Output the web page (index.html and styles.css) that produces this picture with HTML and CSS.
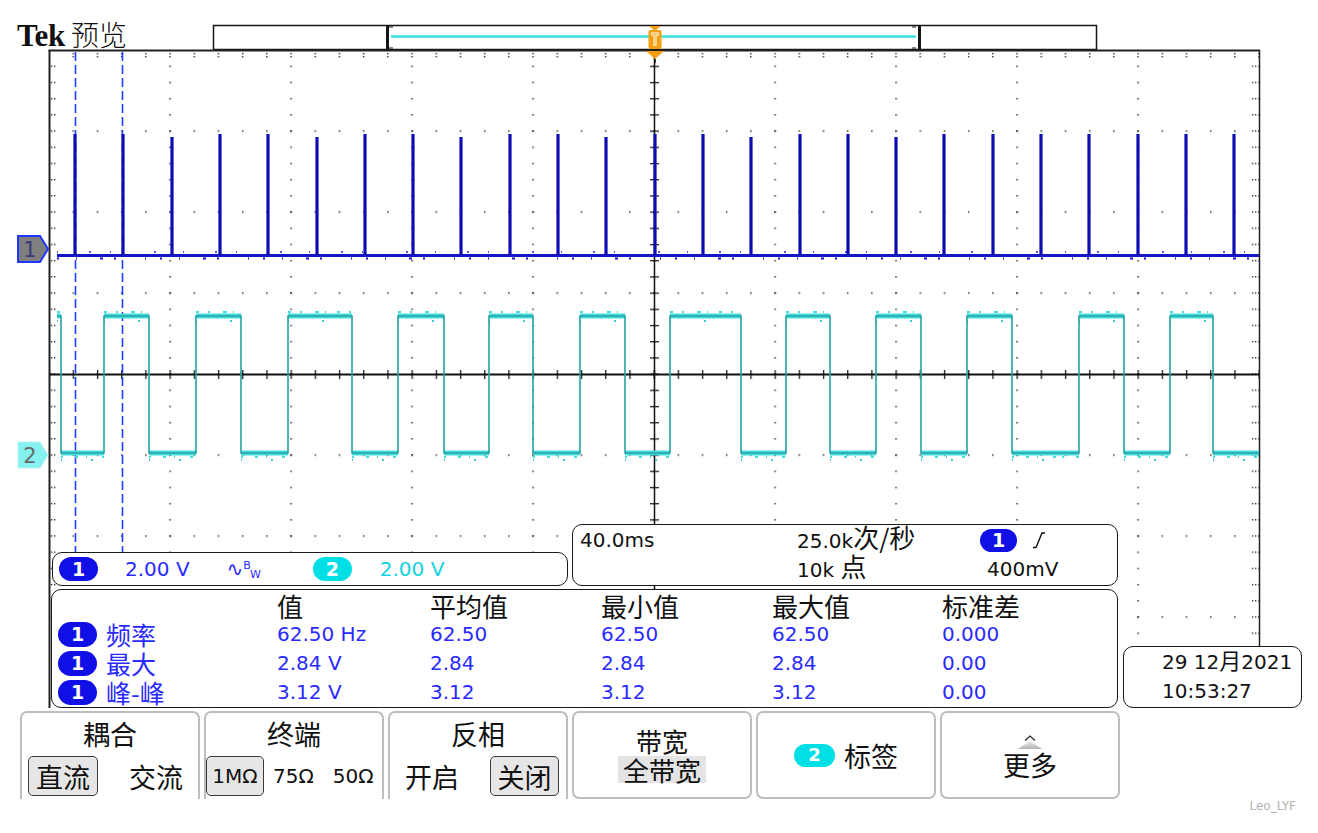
FILE: index.html
```html
<!DOCTYPE html>
<html lang="zh">
<head>
<meta charset="utf-8">
<title>Tek 预览</title>
<link rel="stylesheet" href="styles.css">
</head>
<body>
<div class="scope">
  <div class="screen">
    <svg class="plot" width="1318" height="711" viewBox="0 0 1318 711">
      <defs>
        <pattern id="rowdots" x="48.3" y="49.3" width="24.2" height="81" patternUnits="userSpaceOnUse"><rect width="1.5" height="1.5" fill="#333"/></pattern>
        <pattern id="coldots" x="48.3" y="49.3" width="121" height="16.2" patternUnits="userSpaceOnUse"><rect width="1.5" height="1.5" fill="#333"/></pattern>
        <pattern id="hticks" x="48.5" y="370" width="24.2" height="9" patternUnits="userSpaceOnUse"><rect width="1.3" height="9" fill="#222"/></pattern>
        <pattern id="vticks" x="650" y="49.5" width="9" height="16.2" patternUnits="userSpaceOnUse"><rect width="9" height="1.3" fill="#222"/></pattern>
        <pattern id="lticks" x="51" y="49.3" width="8" height="16.2" patternUnits="userSpaceOnUse"><rect width="1.4" height="1.4" fill="#333"/><rect x="3" width="1.4" height="1.4" fill="#333"/></pattern>
        <pattern id="rticks" x="1252" y="49.3" width="8" height="16.2" patternUnits="userSpaceOnUse"><rect width="1.4" height="1.4" fill="#333"/><rect x="3" width="1.4" height="1.4" fill="#333"/></pattern>
        <pattern id="tticks" x="48.3" y="53" width="24.2" height="8" patternUnits="userSpaceOnUse"><rect width="1.4" height="1.4" fill="#333"/><rect y="3" width="1.4" height="1.4" fill="#333"/></pattern>
        <path id="hi" d="M57 316H61M104 316H149M196 316H241M288 316H352M398 316H444M489 316H533M580 316H625M670 316H741M786 316H830M876 316H921M967 316H1012M1079 316H1124M1170 316H1213"/>
        <path id="lo" d="M61 453H104M149 453H196M241 453H288M352 453H398M444 453H489M533 453H580M625 453H670M741 453H786M830 453H876M921 453H967M1012 453H1079M1124 453H1170M1213 453H1259"/>
      </defs>

      <!-- record view bar -->
      <rect x="213.5" y="25.5" width="883" height="24" fill="#fff" stroke="#151515" stroke-width="1.5"/>
      <rect x="386" y="25" width="3" height="25" fill="#151515"/>
      <rect x="918" y="25" width="3" height="25" fill="#151515"/>
      <path d="M389 27H393M389 48H393M916 27H912M916 48H912" stroke="#151515" stroke-width="1.2"/>
      <path d="M391 36.5H916" stroke="#33e2e6" stroke-width="2.5"/>

      <!-- graticule -->
      <rect x="49" y="50" width="1210" height="650" fill="url(#rowdots)"/>
      <rect x="49" y="50" width="1210" height="650" fill="url(#coldots)"/>
      <rect x="49" y="370" width="1210" height="9" fill="url(#hticks)"/>
      <rect x="650" y="50" width="9" height="650" fill="url(#vticks)"/>
      <rect x="51" y="50" width="6" height="650" fill="url(#lticks)"/>
      <rect x="1252" y="50" width="6" height="600" fill="url(#rticks)"/>
      <rect x="49" y="53" width="1210" height="6" fill="url(#tticks)"/>
      <path d="M49.5 50V708" stroke="#222" stroke-width="2"/>
      <path d="M48.5 50.5H1260" stroke="#222" stroke-width="2"/>
      <path d="M1259.5 50V647" stroke="#222" stroke-width="1.5"/>
      <path d="M49 374.5H1259" stroke="#111" stroke-width="2"/>
      <path d="M654.5 50V700" stroke="#111" stroke-width="1.5"/>

      <!-- cursors -->
      <path d="M75.5 52V553M122.5 52V553" stroke="#2040ff" stroke-width="1.6" stroke-dasharray="9 4"/>

      <!-- channel 2 -->
      <use href="#hi" stroke="#44dcdc" stroke-width="5" fill="none"/>
      <use href="#lo" stroke="#44dcdc" stroke-width="5" fill="none"/>
      <use href="#hi" transform="translate(0,-4)" stroke="#44dcdc" stroke-width="2" stroke-dasharray="3 9 2 13 4 6 1 11" fill="none"/>
      <use href="#lo" transform="translate(0,4)" stroke="#44dcdc" stroke-width="2" stroke-dasharray="2 12 3 8 1 15 3 6" fill="none"/>
      <use href="#lo" transform="translate(0,7)" stroke="#3fcaca" stroke-width="2" stroke-dasharray="1 29 2 37" fill="none"/>
      <use href="#hi" transform="translate(0,5)" stroke="#3fcaca" stroke-width="2" stroke-dasharray="1 33 2 41" fill="none"/>
      <path d="M57 316H61V453H104V316H149V453H196V316H241V453H288V316H352V453H398V316H444V453H489V316H533V453H580V316H625V453H670V316H741V453H786V316H830V453H876V316H921V453H967V316H1012V453H1079V316H1124V453H1170V316H1213V453H1259" fill="none" stroke="#27a2a2" stroke-width="1.6"/>

      <!-- channel 1 -->
      <path d="M57 255.5H1259" stroke="#1515c4" stroke-width="3"/>
      <path d="M57 258.5H1259" stroke="#1515c4" stroke-width="2" stroke-dasharray="2 17 1 23 3 11 2 29 1 14" />
      <path d="M57 252H1259" stroke="#1a1ad0" stroke-width="1.5" stroke-dasharray="1 31 2 19 1 43 2 27" />
      <path d="M75 255V134M123 255V134M172 255V137M220 255V134M268 255V134M317 255V137M365 255V134M413 255V134M461 255V137M510 255V134M558 255V134M606 255V137M655 255V134M703 255V134M751 255V137M800 255V134M848 255V134M896 255V137M944 255V134M993 255V134M1041 255V134M1089 255V134M1138 255V134M1186 255V134M1234 255V134" stroke="#0c0cb4" stroke-width="3.2"/>

      <!-- channel markers -->
      <path d="M18 236H40L48 249L40 262H18Z" fill="#7f7f7f" stroke="#2036ff" stroke-width="2"/>
      <text x="30" y="257" class="mk mk1">1</text>
      <path d="M18 442H40L48 455L40 468H18Z" fill="#86f1f1" stroke="#b4f6f6" stroke-width="1"/>
      <text x="30" y="463" class="mk mk2">2</text>

      <!-- trigger position marker -->
      <path d="M649 26H661L655 31Z" fill="#f5a013"/>
      <rect x="648.5" y="30" width="13" height="19" rx="2" fill="#f5a013"/>
      <path d="M651 34H659M655 34V46" stroke="#fff" stroke-width="3"/>
      <path d="M651.5 34H658.5M655 34V45.5" stroke="#f5a013" stroke-width="1"/>
      <path d="M646 51H664L655 59Z" fill="#f5a013"/>
      <path d="M655 59V63" stroke="#111" stroke-width="1.5"/>
    </svg>

    <div class="logo"><span class="tek">Tek</span><span class="mode">预览</span></div>

    <div class="box chan-box">
      <span class="pill p1">1</span>
      <span class="blue v1">2.00 V</span>
      <span class="blue bw">∿<sup>B</sup><sub>W</sub></span>
      <span class="pill p2">2</span>
      <span class="cyan v2">2.00 V</span>
    </div>

    <div class="box time-box">
      <span>40.0ms</span>
      <span>25.0k<span class="cn">次/秒</span></span>
      <span class="trig"><span class="pill p1 small">1</span><svg class="edge" width="14" height="20" viewBox="0 0 14 20"><path d="M1 17.5H4L10 3H13" fill="none" stroke="#111" stroke-width="1.4"/></svg></span>
      <span></span>
      <span>10k <span class="cn">点</span></span>
      <span class="lvl">400mV</span>
    </div>

    <div class="box meas-box">
      <span></span>
      <span class="hd">值</span>
      <span class="hd">平均值</span>
      <span class="hd">最小值</span>
      <span class="hd">最大值</span>
      <span class="hd">标准差</span>

      <span class="lab"><span class="pill p1 tall">1</span><span class="lname blue">频率</span></span>
      <span class="blue">62.50 Hz</span>
      <span class="blue">62.50</span>
      <span class="blue">62.50</span>
      <span class="blue">62.50</span>
      <span class="blue">0.000</span>

      <span class="lab"><span class="pill p1 tall">1</span><span class="lname blue">最大</span></span>
      <span class="blue">2.84 V</span>
      <span class="blue">2.84</span>
      <span class="blue">2.84</span>
      <span class="blue">2.84</span>
      <span class="blue">0.00</span>

      <span class="lab"><span class="pill p1 tall">1</span><span class="lname blue">峰-峰</span></span>
      <span class="blue">3.12 V</span>
      <span class="blue">3.12</span>
      <span class="blue">3.12</span>
      <span class="blue">3.12</span>
      <span class="blue">0.00</span>
    </div>

    <div class="box date-box">
      <div>29 12<span class="cn mon">月</span>2021</div>
      <div>10:53:27</div>
    </div>
  </div>

  <div class="menu">
    <div class="btn open">
      <div class="btn-title">耦合</div>
      <div class="opts o1"><span class="opt-box w70">直流</span><span class="zh">交流</span></div>
    </div>
    <div class="btn open">
      <div class="btn-title">终端</div>
      <div class="opts o2"><span class="opt-box w58 lat">1MΩ</span><span class="lat g9">75Ω</span><span class="lat g19">50Ω</span></div>
    </div>
    <div class="btn open">
      <div class="btn-title">反相</div>
      <div class="opts o3"><span class="zh">开启</span><span class="opt-box w69">关闭</span></div>
    </div>
    <div class="btn stack">
      <div class="zh line">带宽</div>
      <div class="zh line"><span class="sel">全带宽</span></div>
    </div>
    <div class="btn row">
      <span class="pill p2 label-pill">2</span><span class="zh">标签</span>
    </div>
    <div class="btn stack">
      <svg class="caret" width="40" height="14" viewBox="0 0 40 14"><defs><linearGradient id="tri2" x1="0" y1="0" x2="0" y2="1"><stop offset="0" stop-color="#f0f0f0"/><stop offset="1" stop-color="#b0b0b0"/></linearGradient></defs><path d="M8 14L20 6L32 14Z" fill="url(#tri2)"/><path d="M15 5.5L20 1L25 5.5" fill="none" stroke="#222" stroke-width="1.2"/></svg>
      <div class="zh more">更多</div>
    </div>
  </div>
  <div class="watermark">Leo_LYF</div>
</div>
</body>
</html>
```

FILE: styles.css
```css
* { box-sizing: border-box; margin: 0; padding: 0; }

body {
  width: 1318px;
  height: 833px;
  overflow: hidden;
  background: #fff;
  color: #111;
  font-family: "DejaVu Sans", "Noto Sans CJK SC", sans-serif;
  font-size: 20px;
}

.scope {
  width: 1318px;
  height: 833px;
  display: flex;
  flex-direction: column;
}

.screen {
  position: relative;
  height: 711px;
  flex: none;
}

.plot {
  position: absolute;
  left: 0;
  top: 0;
}

.mk {
  font-family: "DejaVu Sans", sans-serif;
  font-size: 21px;
  text-anchor: middle;
}
.mk1 { fill: #3c3c78; }
.mk2 { fill: #6a6a6a; }

.logo {
  position: absolute;
  left: 17px;
  top: 17px;
  display: flex;
  align-items: baseline;
  gap: 6px;
}
.tek {
  font-family: "Liberation Serif", serif;
  font-weight: 700;
  font-size: 31px;
  letter-spacing: -0.3px;
  line-height: 34px;
}
.mode {
  font-family: "Noto Sans CJK SC", sans-serif;
  font-weight: 300;
  font-size: 28px;
  line-height: 34px;
}

.cn {
  font-family: "Noto Sans CJK SC", sans-serif;
  font-size: 26px;
  line-height: 1;
}

.blue { color: #2a2aff; }
.cyan { color: #12d2e0; }

.box {
  position: absolute;
  background: #fff;
  border: 1.5px solid #1a1a1a;
  border-radius: 10px;
}

.pill {
  display: inline-flex;
  align-items: center;
  justify-content: center;
  width: 39px;
  height: 24px;
  border-radius: 12px;
  color: #fff;
  font-weight: 700;
  font-size: 19px;
  line-height: 1;
  flex: none;
}
.p1 { background: #1010e6; }
.p2 { background: #00dfe6; }
.pill.small { width: 37px; height: 23px; }
.pill.tall { height: 25px; border-radius: 13px; }

/* channel readout */
.chan-box {
  left: 52px;
  top: 552px;
  width: 516px;
  height: 34px;
  display: flex;
  align-items: center;
  padding-left: 6px;
  line-height: 30px;
}
.chan-box .v1 { margin-left: 27px; }
.chan-box .bw { margin-left: 37px; font-size: 20px; }
.bw sup, .bw sub { font-size: 11px; line-height: 0; }
.bw sup { vertical-align: 7px; }
.bw sub { vertical-align: -2px; margin-left: -1px; }
.chan-box .p2 { margin-left: 52px; }
.chan-box .v2 { margin-left: 28px; }

/* timebase readout */
.time-box {
  left: 572px;
  top: 524px;
  width: 546px;
  height: 62px;
  padding: 0.5px 0 0 7px;
  display: grid;
  grid-template-columns: 217px 183px auto;
  grid-template-rows: 29px 29px;
  align-items: center;
  white-space: nowrap;
  line-height: 29px;
}
.trig { display: flex; align-items: center; }
.edge { margin-left: 15px; }
.lvl { margin-left: 7px; }

/* measurements */
.meas-box {
  left: 51px;
  top: 589px;
  width: 1067px;
  height: 119px;
  padding: 0.5px 0 0 6px;
  display: grid;
  grid-template-columns: 219px 153px 171px 171px 170px 1fr;
  grid-template-rows: repeat(4, 29px);
  align-items: center;
  line-height: 29px;
  white-space: nowrap;
}
.hd {
  font-family: "Noto Sans CJK SC", sans-serif;
  font-size: 26px;
  line-height: 29px;
  color: #111;
}
.lab { display: flex; align-items: center; gap: 9px; height: 29px; }
.lname {
  font-family: "Noto Sans CJK SC", sans-serif;
  font-size: 25px;
  line-height: 29px;
}

/* date */
.date-box {
  left: 1123px;
  top: 646px;
  width: 179px;
  height: 62px;
  padding: 1px 0 0 38px;
  line-height: 29px;
  white-space: nowrap;
}
.mon { font-size: 22px; }

/* soft menu */
.menu {
  flex: none;
  display: flex;
  gap: 4px;
  padding-left: 20px;
  height: 88px;
}
.btn {
  width: 180px;
  height: 88px;
  border: 2px solid #bdbdbd;
  border-radius: 7px;
  display: flex;
  flex-direction: column;
  align-items: center;
}
.btn.open {
  border-bottom: none;
  border-bottom-left-radius: 0;
  border-bottom-right-radius: 0;
}
.btn-title,
.zh {
  font-family: "Noto Sans CJK SC", sans-serif;
  font-size: 27px;
}
.btn-title {
  height: 42px;
  line-height: 42px;
}
.opts {
  width: 100%;
  height: 42px;
  display: flex;
  align-items: center;
}
.o1 { justify-content: space-between; padding: 0 15px 0 6px; }
.o2 { padding-left: 0; }
.o3 { justify-content: space-between; padding: 0 7px 0 15px; }
.opt-box {
  height: 40px;
  display: inline-flex;
  align-items: center;
  justify-content: center;
  border: 1.5px solid #3a3a3a;
  border-radius: 5px;
  background: #e6e6e6;
  font-family: "Noto Sans CJK SC", sans-serif;
  font-size: 27px;
}
.opt-box.lat { font-family: "DejaVu Sans", sans-serif; font-size: 20px; }
.lat { font-family: "DejaVu Sans", sans-serif; font-size: 20px; }
.w70 { width: 70px; }
.w58 { width: 58px; }
.w69 { width: 69px; }
.g9 { margin-left: 9px; }
.g19 { margin-left: 19px; }

.btn.stack { justify-content: center; }
.line {
  font-size: 26px;
  height: 28px;
  line-height: 28px;
  display: flex;
  align-items: center;
  justify-content: center;
}
.sel {
  display: inline-block;
  line-height: 27px;
  background: #e4e4e4;
  padding: 0 5px;
}
.btn.row { flex-direction: row; justify-content: center; }
.label-pill { width: 41px; height: 23px; margin-right: 9px; font-size: 18px; }
.caret { margin-top: 6px; }
.more { line-height: 32px; }

.watermark {
  margin-top: 1px;
  padding-right: 22px;
  text-align: right;
  font-family: "DejaVu Sans", sans-serif;
  font-size: 12px;
  line-height: 13px;
  color: #b3b3b3;
}
```
